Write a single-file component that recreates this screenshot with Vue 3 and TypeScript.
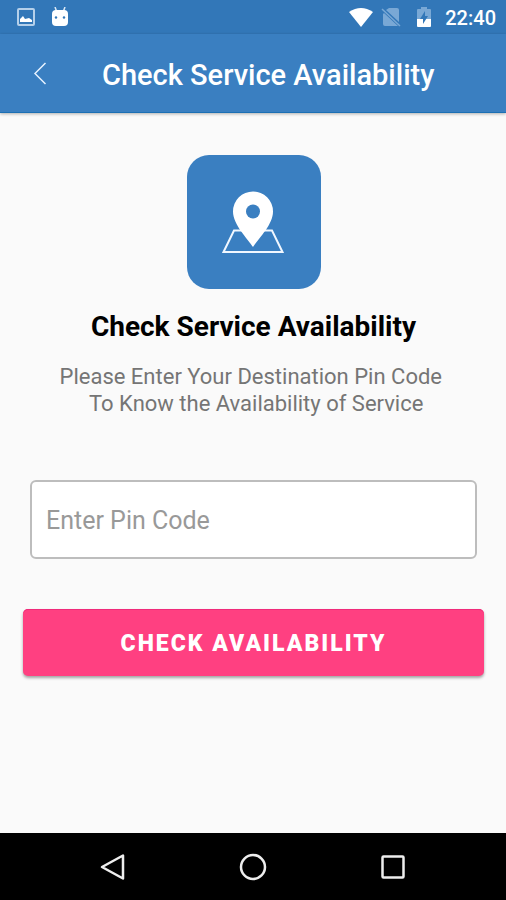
<script setup lang="ts">
import { ref } from 'vue'

const pinCode = ref<string>('')
const submitted = ref<string>('')

function checkAvailability(): void {
  submitted.value = pinCode.value.trim()
}
</script>

<template>
  <div class="screen">
    <div class="status-bar">
      <div class="status-group">
        <svg class="status-picture" width="18" height="18" viewBox="0 0 18 18" aria-hidden="true">
          <rect x="1" y="1" width="16" height="16" rx="1" fill="none" stroke="#b5d0ea" stroke-width="2" />
          <path d="M3 14V11L6 8L8 11L12 10L15 12V14Z" fill="#fff" />
        </svg>
        <svg width="18" height="20" viewBox="0 0 18 20" aria-hidden="true">
          <path d="M4 0L5.500 4M14 0L12.500 4" stroke="#dceaf7" stroke-width="1.500" />
          <path d="M1 7Q1 3 5 3H13Q17 3 17 7V15Q17 19 13 19H5Q1 19 1 15Z" fill="#fff" />
          <circle cx="5" cy="10.500" r="1.200" fill="#3277b8" />
          <circle cx="13" cy="10.500" r="1.200" fill="#3277b8" />
        </svg>
      </div>
      <div class="status-group status-right">
        <svg width="26" height="20" viewBox="0 0 26 20" aria-hidden="true">
          <path d="M1 5Q13 -3 25 5L13 20Z" fill="#fff" />
        </svg>
        <svg width="20" height="20" viewBox="0 0 20 20" aria-hidden="true">
          <path d="M8 1H16Q18 1 18 3V15L5 3ZM3 6L17 19H4Q2 19 2 17V7Z" fill="#79a8d5" />
          <path d="M1 2L19 19" stroke="#79a8d5" stroke-width="1.500" />
        </svg>
        <svg class="status-battery" width="16" height="20" viewBox="0 0 16 20" aria-hidden="true">
          <path d="M5 0H11V2H14Q15 2 15 3V12H1V3Q1 2 2 2H5Z" fill="#79a8d5" />
          <path d="M1 12H15V19Q15 20 14 20H2Q1 20 1 19Z" fill="#fff" />
          <path d="M9 4L4 12H7V17L12 9H9Z" fill="#3277b8" />
        </svg>
        <span class="clock">22:40</span>
      </div>
    </div>

    <header class="app-bar">
      <button class="back" type="button" aria-label="Back">
        <svg width="14" height="24" viewBox="0 0 14 24" aria-hidden="true">
          <path d="M12.500 2L2 12.500L12.500 23" fill="none" stroke="#e6f2ff" stroke-width="1.500" />
        </svg>
      </button>
      <h1 class="title">Check Service Availability</h1>
    </header>

    <main class="content">
      <div class="badge">
        <svg width="64" height="64" viewBox="0 0 64 64" aria-hidden="true">
          <path d="M12 39.500H50L60.500 61H1.500Z" fill="none" stroke="#f0f7ff" stroke-width="2" />
          <path
            d="M31 56C26 48 11 34 11 20.500A20 20 0 0 1 51 20.500C51 34 36 48 31 56Z"
            fill="#fff"
          />
          <circle cx="31" cy="20.500" r="7" fill="#3a7fc1" />
        </svg>
      </div>
      <h2 class="heading">Check Service Availability</h2>
      <p class="lead">Please Enter Your Destination Pin Code&nbsp;<br />&nbsp;To Know the Availability of Service</p>

      <form class="form" @submit.prevent="checkAvailability">
        <input
          v-model="pinCode"
          class="pin"
          type="text"
          inputmode="numeric"
          placeholder="Enter Pin Code"
          aria-label="Enter Pin Code"
        />
        <button class="submit" type="submit">CHECK AVAILABILITY</button>
      </form>
    </main>

    <nav class="nav-bar" aria-label="System">
      <button class="nav-button" type="button" aria-label="Back">
        <svg width="28" height="28" viewBox="0 0 28 28" aria-hidden="true">
          <path d="M24 2.500V25.500L3 14Z" />
        </svg>
      </button>
      <button class="nav-button" type="button" aria-label="Home">
        <svg width="28" height="28" viewBox="0 0 28 28" aria-hidden="true">
          <circle cx="14" cy="14" r="12" />
        </svg>
      </button>
      <button class="nav-button" type="button" aria-label="Recent apps">
        <svg width="28" height="28" viewBox="0 0 28 28" aria-hidden="true">
          <rect x="3.500" y="3.500" width="21" height="21" rx="1" />
        </svg>
      </button>
    </nav>
  </div>
</template>

<style>
body {
  margin: 0;
  background: #fafafa;
}
</style>

<style scoped>
.screen {
  display: flex;
  flex-direction: column;
  min-height: 100vh;
  box-sizing: border-box;
  background: #fafafa;
  font-family: Roboto, "Liberation Sans", sans-serif;
}

button {
  border: 0;
  padding: 0;
  background: none;
  font-family: inherit;
  cursor: pointer;
}

svg {
  display: block;
}

.status-bar {
  display: flex;
  align-items: center;
  justify-content: space-between;
  height: 34px;
  padding: 0 10px 0 17px;
  background: #3277b8;
}

.status-group {
  display: flex;
  align-items: center;
  gap: 16px;
}

.status-right {
  gap: 7px;
}

.status-battery {
  margin: 0 6px 0 8px;
}

.clock {
  color: #fff;
  font-size: 20px;
  font-weight: 500;
  line-height: 24px;
  padding-top: 2px;
}

.app-bar {
  display: flex;
  align-items: center;
  height: 79px;
  box-sizing: border-box;
  padding: 0 20px;
  border-bottom: 1px solid #1c70b4;
  background: #3a7fc1;
  box-shadow: 0 1px 3px rgba(0, 0, 0, 0.3);
}

.back {
  display: flex;
  align-items: center;
  justify-content: center;
  width: 40px;
  height: 48px;
}

.title {
  margin: 0 0 0 42px;
  padding-top: 4px;
  color: #fff;
  font-size: 29px;
  font-weight: 500;
  line-height: 32px;
  white-space: nowrap;
}

.content {
  display: flex;
  flex: 1;
  flex-direction: column;
  align-items: center;
  padding: 42px 22px 24px 23px;
}

.badge {
  display: flex;
  align-items: center;
  justify-content: center;
  width: 134px;
  height: 134px;
  box-sizing: border-box;
  padding-top: 2px;
  border-radius: 22px;
  background: #3a7fc1;
}

.heading {
  margin: 22px 0 0;
  color: #000;
  font-size: 28px;
  font-weight: 700;
  line-height: 32px;
}

.lead {
  margin: 20px 0 0;
  color: #757575;
  font-size: 22px;
  line-height: 27px;
  text-align: center;
}

.form {
  display: flex;
  flex-direction: column;
  align-self: stretch;
  gap: 50px;
  margin-top: 63px;
}

.pin {
  height: 79px;
  box-sizing: border-box;
  margin: 0 7px;
  padding: 2px 14px 0;
  border: 2px solid #bdbdbd;
  border-radius: 6px;
  background: #fff;
  color: #212121;
  font-family: inherit;
  font-size: 25px;
}

.pin::placeholder {
  color: #999;
  opacity: 1;
}

.submit {
  height: 67px;
  padding-top: 2px;
  border-radius: 5px;
  background: #ff4081;
  box-shadow: inset 0 1px 0 #f02a7a, 0 2px 3px rgba(0, 0, 0, 0.35);
  color: #fff;
  font-size: 23px;
  font-weight: 900;
  letter-spacing: 2px;
}

.nav-bar {
  display: flex;
  align-items: center;
  justify-content: center;
  gap: 112px;
  height: 67px;
  background: #000;
}

.nav-button svg {
  fill: none;
  stroke: #eee;
  stroke-width: 2.5;
  stroke-linejoin: round;
}
</style>
